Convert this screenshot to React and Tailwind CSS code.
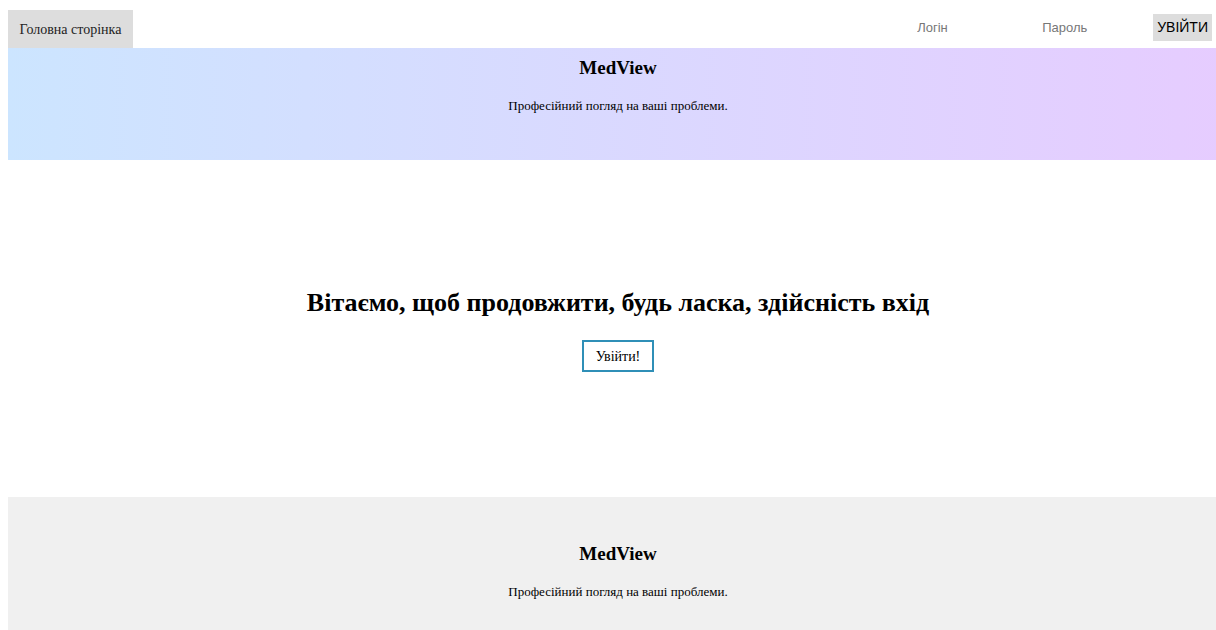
import React, { useState } from 'react';

const serif = { fontFamily: '"Liberation Serif", "Times New Roman", serif' };

const Banner = () => (
  <div className="flex flex-col items-center">
    <h2 className="text-[19px] font-bold text-black leading-none">MedView</h2>
    <p className="text-[13px] text-black leading-none mt-[22px]">Професійний погляд на ваші проблеми.</p>
  </div>
);

const App = () => {
  const [form, setForm] = useState({ login: '', password: '' });

  return (
    <div className="pl-2 bg-white min-h-[630px] overflow-hidden" style={serif}>
      <nav className="flex justify-between items-start pt-2.5 w-[1208px]">
        <a href="#" className="h-[38px] w-[125px] bg-[#dddddd] flex items-center justify-center text-[14px] text-[#222]">
          Головна сторінка
        </a>
        <div className="flex items-center pt-1 font-['Liberation_Sans',Arial,sans-serif]">
          <input
            placeholder="Логін"
            value={form.login}
            onChange={(e) => setForm({ ...form, login: e.target.value })}
            className="w-[124px] h-[27px] pl-[6px] text-[13px] placeholder-[#777] outline-none bg-transparent"
          />
          <input
            type="password"
            placeholder="Пароль"
            value={form.password}
            onChange={(e) => setForm({ ...form, password: e.target.value })}
            className="w-[118px] h-[27px] pl-[7px] text-[13px] placeholder-[#777] outline-none bg-transparent"
          />
          <button className="h-[27px] px-[4px] bg-[#dddddd] text-[14px] text-black mr-[4px]">УВІЙТИ</button>
        </div>
      </nav>

      <header className="w-[1220px] h-[112px] bg-gradient-to-r from-[#cce5ff] to-[#e6ccff] pt-[10px]">
        <Banner />
      </header>

      <main className="w-[1220px] h-[337px] flex flex-col items-center justify-center pt-[5px]">
        <h1 className="text-[26px] font-bold text-black leading-none">Вітаємо, щоб продовжити, будь ласка, здійсність вхід</h1>
        <button className="mt-[24px] h-[32px] px-[12px] border-2 border-[#2f8fb7] bg-white text-[14px] text-black">Увійти!</button>
      </main>

      <footer className="w-[1220px] h-[133px] bg-[#f0f0f0] pt-[47px]">
        <Banner />
      </footer>
    </div>
  );
};

export default App;
